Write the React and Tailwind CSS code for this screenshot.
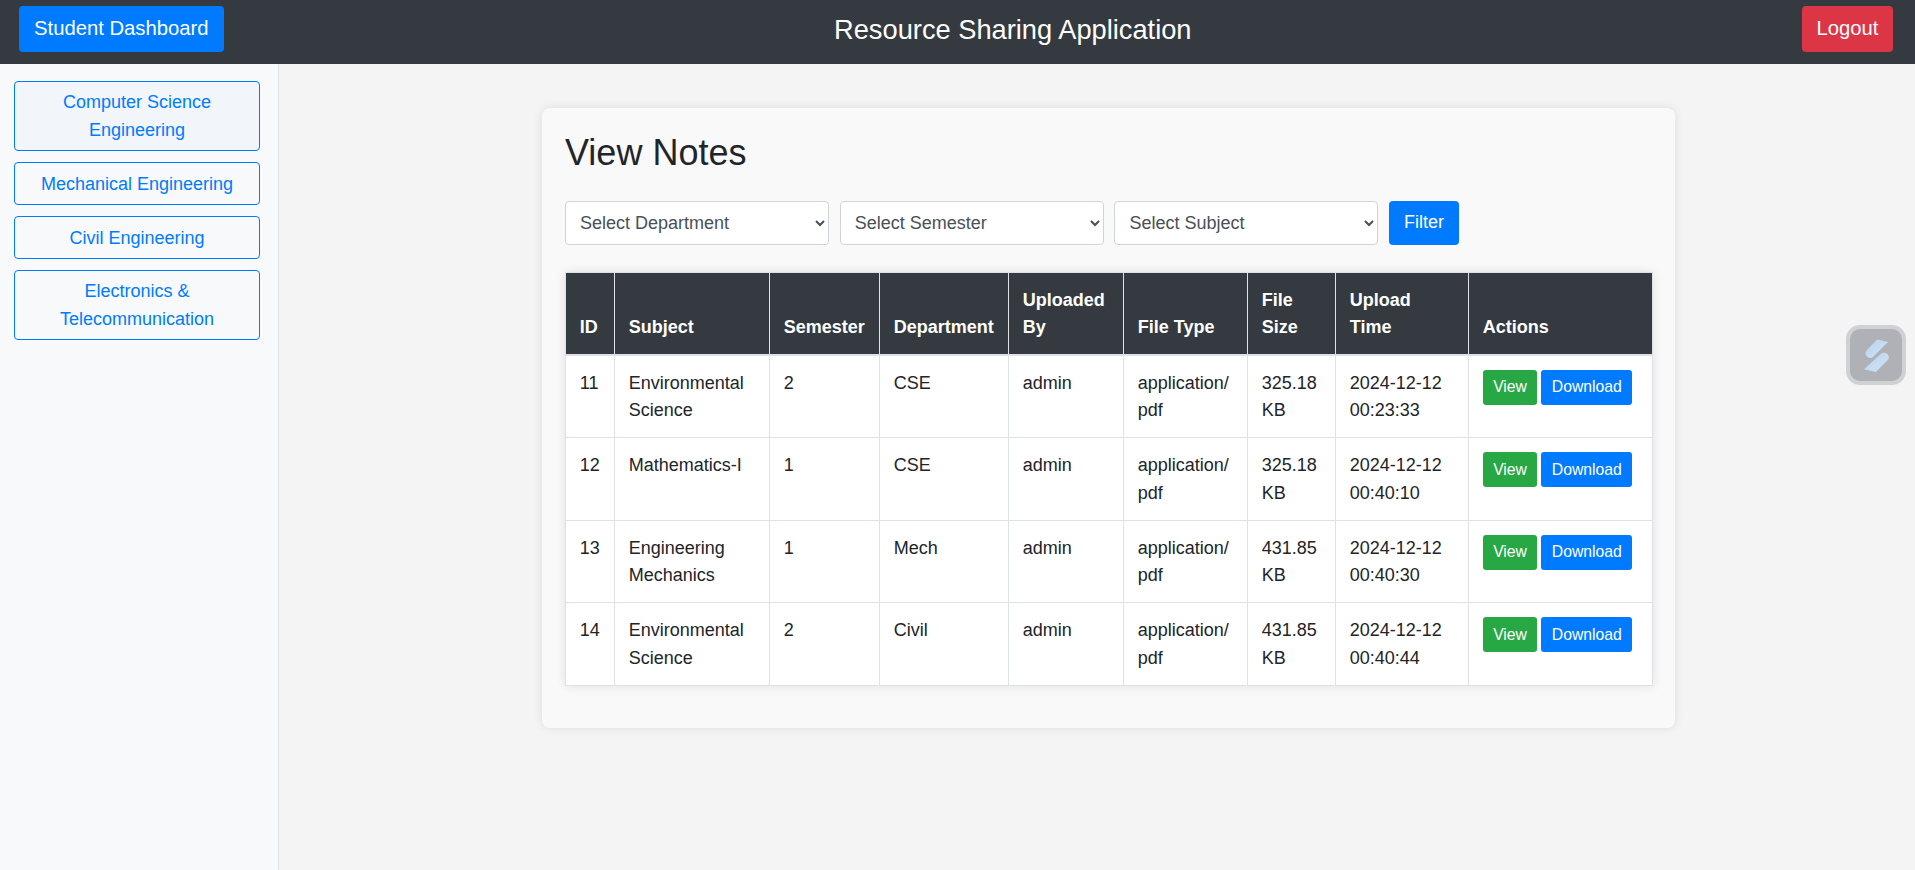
const sidebarLinks = [
  { label: "Computer Science Engineering", active: true },
  { label: "Mechanical Engineering" },
  { label: "Civil Engineering" },
  { label: "Electronics & Telecommunication" },
];

const notes = [
  { id: 11, subject: "Environmental Science", semester: 2, department: "CSE", size: "325.18 KB", time: "2024-12-12 00:23:33" },
  { id: 12, subject: "Mathematics-I", semester: 1, department: "CSE", size: "325.18 KB", time: "2024-12-12 00:40:10" },
  { id: 13, subject: "Engineering Mechanics", semester: 1, department: "Mech", size: "431.85 KB", time: "2024-12-12 00:40:30" },
  { id: 14, subject: "Environmental Science", semester: 2, department: "Civil", size: "431.85 KB", time: "2024-12-12 00:40:44" },
];

const headers = ["ID", "Subject", "Semester", "Department", "Uploaded By", "File Type", "File Size", "Upload Time", "Actions"];

const selectCls =
  "h-[44px] w-[264px] rounded border border-[#ced4da] bg-white pl-[10px] pr-[4px] text-[18px] text-[#495057]";
const thCls =
  "border border-[#dee2e6] border-b-2 pl-[13.75px] pr-[13px] pt-[13.75px] pb-[11.75px] text-left align-bottom font-bold";
const tdCls = "border border-[#dee2e6] pl-[13.75px] pr-[13px] pt-[14px] pb-[12.3px] align-top";
const smallBtnCls = "h-[35px] rounded-[3px] px-[10.4px] text-[15.75px] text-white";

const FloatingWidget = () => (
  <div className="fixed left-[1846px] top-[325px] flex h-[60px] w-[60px] items-center justify-center rounded-[14px] border-4 border-[#d0d1d4] bg-[#b0b1b6]">
    <svg width="25" height="33" viewBox="100 84 76 100" fill="none">
      <defs>
        <linearGradient id="blade" x1="0" y1="0" x2="1" y2="1">
          <stop offset="0" stopColor="#b2d2f0" />
          <stop offset="1" stopColor="#d6e5f4" />
        </linearGradient>
      </defs>
      <path d="M140 85 L173 93 L128 138 Q118 146 108 136 Q100 126 110 116 Z" fill="url(#blade)" />
      <path d="M150 130 Q162 120 172 130 Q180 142 170 150 L136 184 L100 176 Z" fill="url(#blade)" />
    </svg>
  </div>
);

export default function App() {
  return (
    <div className="flex min-h-screen flex-col bg-[#f4f4f4] font-['Liberation_Sans',Arial,sans-serif] text-[18px] leading-[27.6px] text-[#212529]">
      <header className="flex h-16 items-center justify-between bg-[#343a40] pb-[6px] pl-[19px] pr-[22px] text-white">
        <button className="h-[46px] rounded bg-[#007bff] px-[15px] text-[20.25px]">Student Dashboard</button>
        <h1 className="pt-[1px] text-[27.25px]">Resource Sharing Application</h1>
        <button className="h-[46px] rounded bg-[#dc3545] px-[14.5px] text-[20.25px]">Logout</button>
      </header>

      <div className="flex flex-1">
        <aside className="flex w-[279px] flex-col gap-[11px] border-r border-[#dee2e6] bg-[#f8f9fa] pl-[14px] pr-[18px] pt-[17px]">
          {sidebarLinks.map((link) => (
            <a
              key={link.label}
              className={`rounded border border-[#007bff] px-3 pb-[5.8px] pt-[7.4px] text-center text-[#007bff] ${link.active ? "bg-[#f2f6fb]" : ""}`}
            >
              {link.label}
            </a>
          ))}
        </aside>

        <main className="flex-1 pl-[263px] pt-[44px]">
          <div className="h-[620px] w-[1133px] rounded-lg bg-[#f9f9f9] pl-[23px] pr-[22px] pt-[23px] shadow-[0_0_10px_rgba(0,0,0,0.1)]">
            <h2 className="mb-[27px] text-[36px] leading-[43px]">View Notes</h2>

            <div className="mb-[27px] flex gap-[10.7px]">
              <select className={selectCls}>
                <option>Select Department</option>
              </select>
              <select className={selectCls}>
                <option>Select Semester</option>
              </select>
              <select className={selectCls}>
                <option>Select Subject</option>
              </select>
              <button className="h-[44px] rounded bg-[#007bff] px-[15px] text-white">Filter</button>
            </div>

            <table className="w-[1087px] table-fixed border-collapse bg-white shadow-[0_0_10px_rgba(0,0,0,0.1)]">
              <colgroup>
                <col className="w-[49px]" />
                <col className="w-[155px]" />
                <col className="w-[110px]" />
                <col className="w-[129px]" />
                <col className="w-[115px]" />
                <col className="w-[124px]" />
                <col className="w-[88px]" />
                <col className="w-[133px]" />
                <col className="w-[184px]" />
              </colgroup>
              <thead className="bg-[#343a40] text-white">
                <tr>
                  {headers.map((h) => (
                    <th key={h} className={thCls}>{h}</th>
                  ))}
                </tr>
              </thead>
              <tbody>
                {notes.map((note) => (
                  <tr key={note.id}>
                    <td className={tdCls}>{note.id}</td>
                    <td className={tdCls}>{note.subject}</td>
                    <td className={tdCls}>{note.semester}</td>
                    <td className={tdCls}>{note.department}</td>
                    <td className={tdCls}>admin</td>
                    <td className={tdCls}>application/ pdf</td>
                    <td className={tdCls}>{note.size}</td>
                    <td className={tdCls}>{note.time}</td>
                    <td className={tdCls}>
                      <div className="flex gap-[4px]">
                        <button className={`${smallBtnCls} bg-[#28a745]`}>View</button>
                        <button className={`${smallBtnCls} bg-[#007bff]`}>Download</button>
                      </div>
                    </td>
                  </tr>
                ))}
              </tbody>
            </table>
          </div>
        </main>
      </div>

      <FloatingWidget />
    </div>
  );
}
